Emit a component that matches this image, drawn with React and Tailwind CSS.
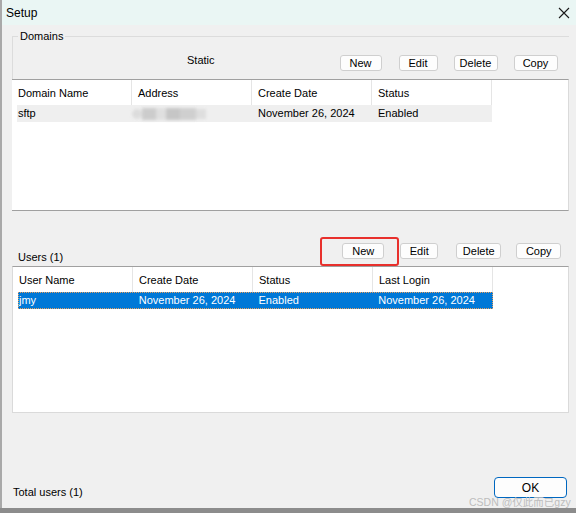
import React from "react";

const font = { fontFamily: '"Liberation Sans", Arial, sans-serif' };

function Btn({ children, w, ml }) {
  return (
    <div
      className={`h-[16px] flex items-center justify-center rounded-[3px] border border-[#cfcfcf] bg-[#fdfdfd] text-[11px] text-black leading-none ${w} ${ml}`}
    >
      {children}
    </div>
  );
}

function HeaderRow({ cols }) {
  return (
    <div className="flex h-[25px] items-center">
      {cols.map((c, i) => (
        <div
          key={i}
          className="w-[120px] h-full flex items-center pl-[6px] pt-[1px] border-r border-[#e5e5e5] text-[11px] text-black"
        >
          {c}
        </div>
      ))}
    </div>
  );
}

export default function App() {
  return (
    <div
      className="relative w-[576px] h-[513px] overflow-hidden bg-[#f0f0f0] flex"
      style={font}
    >
      {/* background window strip */}
      <div className="w-[2px] h-full bg-[#a9a9a9] shrink-0" />
      <div className="flex-1 flex flex-col">
        {/* title bar */}
        <div className="h-[25px] bg-[#eaf6f4] flex items-center justify-between pl-[4px] pr-[6px] shrink-0">
          <span className="text-[12px] text-black">Setup</span>
          <svg width="12" height="12" viewBox="0 0 12 12">
            <path d="M1 1 L11 11 M11 1 L1 11" stroke="#1a1a1a" strokeWidth="1.1" />
          </svg>
        </div>

        <div className="flex-1 flex flex-col pl-[10px] pr-[7px]">
          {/* group box */}
          <div className="relative mt-[11px] h-[43px] border-t border-l border-[#dcdcdc] shrink-0">
            <span className="absolute -top-[7px] left-[5px] bg-[#f0f0f0] px-[2px] text-[11px] leading-[13px] text-black">
              Domains
            </span>
            <div className="flex items-center mt-[18px] h-[16px]">
              <span className="ml-[174px] text-[11px] text-black leading-none -mt-[6px]">Static</span>
              <Btn w="w-[42px]" ml="ml-[125px]">New</Btn>
              <Btn w="w-[39px]" ml="ml-[17px]">Edit</Btn>
              <Btn w="w-[44px]" ml="ml-[16px]">Delete</Btn>
              <Btn w="w-[44px]" ml="ml-[16px]">Copy</Btn>
            </div>
          </div>

          {/* domains list */}
          <div className="h-[132px] bg-white border-t border-b border-t-[#a0a0a0] border-b-[#a0a0a0] border-r border-r-[#dadada] shrink-0">
            <HeaderRow cols={["Domain Name", "Address", "Create Date", "Status"]} />
            <div className="ml-[5px] w-[475px] h-[17px] bg-[#efefef] flex items-center text-[11px] text-black">
              <div className="w-[115px] pl-[1px]">sftp</div>
              <div className="w-[120px] pl-0 flex items-center h-full">
                <div className="flex items-center blur-[1.5px] opacity-80">
                  <div className="w-[10px] h-[10px] bg-[#d8d8d8] rounded-full" />
                  <div className="w-[14px] h-[12px] bg-[#c4c4c4]" />
                  <div className="w-[10px] h-[12px] bg-[#dcdcdc]" />
                  <div className="w-[14px] h-[12px] bg-[#bdbdbd]" />
                  <div className="w-[16px] h-[12px] bg-[#c8c8c8]" />
                  <div className="w-[10px] h-[10px] bg-[#dadada]" />
                </div>
              </div>
              <div className="w-[120px] pl-[6px]">November 26, 2024</div>
              <div className="w-[120px] pl-[6px]">Enabled</div>
            </div>
          </div>

          {/* users toolbar */}
          <div className="h-[55px] flex items-end shrink-0">
            <span className="ml-[6px] mb-[3px] text-[11px] text-black leading-none">Users (1)</span>
            <div className="flex items-center mb-[7px]">
              <Btn w="w-[42px]" ml="ml-[279px]">New</Btn>
              <Btn w="w-[38px]" ml="ml-[16px]">Edit</Btn>
              <Btn w="w-[45px]" ml="ml-[18px]">Delete</Btn>
              <Btn w="w-[45px]" ml="ml-[15px]">Copy</Btn>
            </div>
          </div>

          {/* users list */}
          <div className="h-[147px] bg-white border-t border-t-[#a0a0a0] border-l border-r border-b border-l-[#dadada] border-r-[#dadada] border-b-[#dadada] shrink-0">
            <HeaderRow cols={["User Name", "Create Date", "Status", "Last Login"]} />
            <div className="ml-[5px] w-[475px] h-[17px] bg-[#0078d7] border border-dotted border-[#e8a060] flex items-center text-[11px] text-white">
              <div className="w-[114px] pl-0">jmy</div>
              <div className="w-[120px] pl-[6px]">November 26, 2024</div>
              <div className="w-[120px] pl-[6px]">Enabled</div>
              <div className="w-[120px] pl-[6px]">November 26, 2024</div>
            </div>
          </div>

          {/* bottom */}
          <div className="flex-1 flex items-end justify-between pb-[9px]">
            <span className="ml-[1px] text-[11px] text-black leading-none mb-[1px]">Total users (1)</span>
            <div className="w-[73px] h-[21px] mb-[1px] mr-[2px] rounded-[4px] border-[1.5px] border-[#0067c0] bg-[#fdfdfd] flex items-center justify-center text-[12px] text-black">
              OK
            </div>
          </div>
          <div className="h-[5px] -ml-[12px] -mr-[7px] bg-[#8c8c8c] shrink-0" />
        </div>
      </div>

      {/* red highlight */}
      <div className="absolute left-[320px] top-[237px] w-[79px] h-[29px] border-2 border-[#e8302c] rounded-[3px]" />

      {/* watermark */}
      <div
        className="absolute left-[469px] top-[497px] whitespace-nowrap text-[10.5px] text-[#bdbdbd] leading-none"
        style={{ fontFamily: '"Liberation Sans", "Noto Sans CJK SC", sans-serif' }}
      >
        CSDN @仅此而已gzy
      </div>
    </div>
  );
}
